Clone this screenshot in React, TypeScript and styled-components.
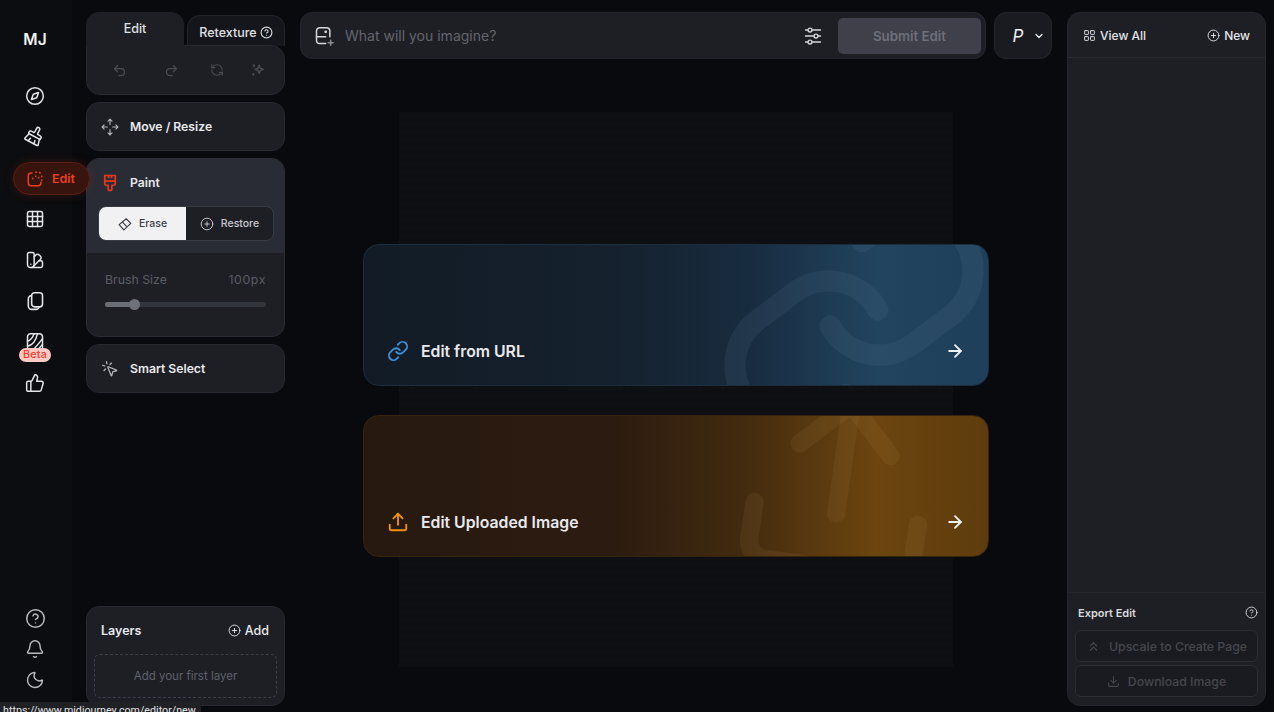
import React from 'react';
import styled, { createGlobalStyle } from 'styled-components';
import {
  ArrowRight,
  Bell,
  BrushCleaning,
  ChevronDown,
  ChevronsUp,
  CircleHelp,
  CirclePlus,
  Compass,
  Download,
  Grid3x3,
  LayoutGrid,
  Link,
  Moon,
  MousePointerClick,
  Redo2,
  RefreshCcw,
  SwatchBook,
  ThumbsUp,
  Undo2,
  Upload,
} from 'lucide-react';

const GlobalStyle = createGlobalStyle`
html, body {
  margin: 0;
  height: 100%;
  background: #090a0d;
  color: #e8e9ec;
  font-family: "Inter", "Liberation Sans", sans-serif;
  overflow: hidden;
}
* { box-sizing: border-box; }
`;

const Page = styled.div`
  position: relative;
  display: flex;
  height: 712px;
  width: 1274px;
  overflow: hidden;
`;

const Rail = styled.nav`
  width: 72px;
  flex: none;
  display: flex;
  flex-direction: column;
  align-items: center;
  background: #0c0d10;
  padding: 29px 2px 17px 0;
  position: relative;
  z-index: 2;
`;

const Logo = styled.div`
  height: 22px;
  line-height: 22px;
  margin-bottom: 24px;
  font-size: 15.5px;
  font-weight: 600;
  color: #f1f2f4;
`;

const RailItem = styled.div`
  position: relative;
  height: 41px;
  width: 100%;
  flex: none;
  display: flex;
  align-items: center;
  justify-content: center;
  color: #e4e5e8;
`;

const BroomTilt = styled.span`
  display: flex;
  transform: translateY(-2px) rotate(28deg);
`;

const RailPill = styled.div`
  align-self: flex-start;
  margin: 5px 0 3px 13px;
  width: 77px;
  height: 33px;
  flex: none;
  display: flex;
  align-items: center;
  gap: 8px;
  padding-left: 12px;
  border-radius: 17px;
  background: #38140f;
  border: 1px solid #5a1e12;
  box-shadow: 0 0 10px rgba(180, 50, 20, 0.22);
  color: #e8401c;
  font-size: 12.4px;
  font-weight: 600;
`;

const Beta = styled.span`
  position: absolute;
  left: 19px;
  top: 27px;
  width: 32px;
  height: 14px;
  border-radius: 7px;
  background: #ffc9c4;
  color: #f0392b;
  font-size: 10.5px;
  line-height: 14px;
  text-align: center;
  font-weight: 500;
  letter-spacing: 0.3px;
`;

const RailSpacer = styled.div`
  flex: 1;
`;

const RailFoot = styled.div`
  height: 30.5px;
  display: flex;
  align-items: center;
  justify-content: center;
  color: #b9bbc0;
`;

const ToolColumn = styled.aside`
  width: 199px;
  flex: none;
  margin: 12px 15px 6px 14px;
  display: flex;
  flex-direction: column;
  gap: 7px;
`;

const TabGroup = styled.div`
  display: flex;
  flex-direction: column;
`;

const Tabs = styled.div`
  display: flex;
  align-items: flex-end;
  gap: 3px;
  height: 33px;
`;

const Tab = styled.div<{ $active?: boolean }>`
  width: 98px;
  height: ${(p) => (p.$active ? '34px' : '31px')};
  margin-bottom: -1px;
  display: flex;
  align-items: flex-start;
  justify-content: center;
  gap: 3px;
  padding-top: ${(p) => (p.$active ? '8px' : '9px')};
  border-radius: 13px 13px 0 0;
  background: ${(p) => (p.$active ? '#1e1f25' : '#15161b')};
  border: 1px solid ${(p) => (p.$active ? '#1e1f25' : '#24252b')};
  border-bottom: none;
  font-size: 12.5px;
  font-weight: 500;
  line-height: 15px;
  color: #e0e1e5;
  position: relative;
  z-index: ${(p) => (p.$active ? 2 : 0)};
`;

const TabHelp = styled.span`
  display: flex;
  margin-top: 1px;
`;

const HistoryBar = styled.div`
  position: relative;
  z-index: 1;
  height: 50px;
  background: #1e1f25;
  border: 1px solid #282930;
  border-radius: 0 14px 14px 14px;
  display: flex;
  align-items: center;
  color: #4a4c53;
  padding-left: 25px;
`;

const HistorySlot = styled.span<{ $w: number }>`
  width: ${(p) => p.$w}px;
  display: flex;
`;

const ToolCard = styled.div`
  height: 49px;
  flex: none;
  background: #1e1f25;
  border: 1px solid #282930;
  border-radius: 13px;
  display: flex;
  align-items: center;
  gap: 11px;
  padding-left: 14px;
  color: #b4b6bb;
`;

const ToolTitle = styled.span`
  font-size: 12.2px;
  font-weight: 600;
  color: #e9eaed;
`;

const PaintCard = styled.div`
  height: 179px;
  flex: none;
  background: #1e1f25;
  border: 1px solid #2c2d34;
  border-radius: 13px;
  overflow: hidden;
`;

const PaintTop = styled.div`
  height: 94px;
  background: #2a2c35;
  padding: 0 10px 0 11px;
`;

const PaintHead = styled.div`
  height: 47px;
  display: flex;
  align-items: center;
  gap: 11px;
  padding-left: 3px;
  color: #e7391a;
`;

const Segment = styled.div`
  display: flex;
  height: 35px;
  border: 1px solid #3a3c45;
  border-radius: 8px;
  background: #1e1f25;
  overflow: hidden;
`;

const SegmentItem = styled.div<{ $active?: boolean }>`
  flex: 1;
  display: flex;
  align-items: center;
  justify-content: center;
  gap: 7px;
  font-size: 10.5px;
  font-weight: 500;
  background: ${(p) => (p.$active ? '#f1f1f4' : 'transparent')};
  color: ${(p) => (p.$active ? '#3a3b42' : '#c9cad0')};
`;

const BrushBlock = styled.div`
  padding: 19px 18px 0;
`;

const BrushRow = styled.div`
  display: flex;
  justify-content: space-between;
  font-size: 12.3px;
  line-height: 16px;
  color: #5a5c64;
`;

const BrushValue = styled.span`
  letter-spacing: 0.6px;
`;

const Track = styled.div`
  position: relative;
  height: 5px;
  margin-top: 14px;
  border-radius: 3px;
  background: #33353c;
`;

const TrackFill = styled.div`
  height: 100%;
  border-radius: 3px;
  background: #6b6d74;
`;

const Thumb = styled.div`
  position: absolute;
  top: -3px;
  width: 11px;
  height: 11px;
  border-radius: 50%;
  background: #6f7178;
`;

const LayersCard = styled.div`
  margin-top: auto;
  height: 100px;
  background: #1e1f25;
  border: 1px solid #282930;
  border-radius: 13px;
  padding: 0 7px;
`;

const LayersHead = styled.div`
  height: 47px;
  display: flex;
  align-items: center;
  justify-content: space-between;
  padding: 0 8px 0 7px;
  font-size: 12.5px;
  font-weight: 600;
  color: #e9eaed;
`;

const AddLink = styled.span`
  display: flex;
  align-items: center;
  gap: 4px;
  font-weight: 500;
`;

const LayerSlot = styled.div`
  height: 44px;
  border: 1px dashed #3c3e46;
  border-radius: 6px;
  display: flex;
  align-items: center;
  justify-content: center;
  font-size: 11.5px;
  color: #5f616b;
`;

const Main = styled.main`
  width: 752px;
  flex: none;
  margin-right: 15px;
  padding-top: 12px;
  display: flex;
  flex-direction: column;
`;

const TopRow = styled.div`
  display: flex;
  gap: 8px;
  height: 47px;
  flex: none;
`;

const PromptBar = styled.div`
  flex: 1;
  display: flex;
  align-items: center;
  background: #1e1f25;
  border: 1px solid #26272d;
  border-radius: 12px;
  padding: 0 4px 0 13px;
  color: #d6d7db;
`;

const Placeholder = styled.span`
  flex: 1;
  margin-left: 11px;
  font-size: 14px;
  color: #63656d;
`;

const FilterButton = styled.span`
  display: flex;
  margin-right: 16px;
`;

const SubmitButton = styled.div`
  width: 143px;
  height: 36px;
  border-radius: 5px;
  background: #3f404a;
  color: #6d6f7a;
  font-size: 13.3px;
  font-weight: 600;
  display: flex;
  align-items: center;
  justify-content: center;
`;

const ModeButton = styled.div`
  width: 58px;
  display: flex;
  align-items: center;
  justify-content: center;
  gap: 10px;
  padding-left: 12px;
  background: #1a1b20;
  border: 1px solid #24252b;
  border-radius: 12px;
  color: #f0f0f3;
`;

const ModeLetter = styled.span`
  font-style: italic;
  font-size: 17px;
`;

const Stage = styled.div`
  position: relative;
  flex: 1;
  display: flex;
  justify-content: center;
  padding-top: 53px;
`;

const CanvasSheet = styled.div`
  width: 554px;
  height: 555px;
  background-color: #0e0f13;
  background-image: radial-gradient(#111216 1px, transparent 1px);
  background-size: 8px 8px;
`;

const CardLayer = styled.div`
  position: absolute;
  inset: 0;
  display: flex;
  flex-direction: column;
  align-items: center;
  gap: 29px;
  padding-top: 185px;
`;

const SourceCard = styled.div<{ $tone: 'blue' | 'amber' }>`
  position: relative;
  width: 626px;
  height: 142px;
  flex: none;
  overflow: hidden;
  border-radius: 16px;
  border: 1px solid ${(p) => (p.$tone === 'blue' ? '#1c2d3e' : '#38250f')};
  background: ${(p) =>
    p.$tone === 'blue'
      ? 'linear-gradient(90deg, rgba(19,29,40,0.9) 0%, rgba(21,34,47,0.94) 40%, #182c40 62%, #21445f 82%, #1f3f5a 100%)'
      : 'linear-gradient(90deg, rgba(42,26,16,0.9) 0%, rgba(46,28,16,0.94) 40%, #412a0f 60%, #6c450f 82%, #5e3c0d 100%)'};
`;

const Watermark = styled.span<{ $x: number; $y: number; $deg: number; $color: string }>`
  position: absolute;
  left: ${(p) => p.$x}px;
  top: ${(p) => p.$y}px;
  display: flex;
  transform: rotate(${(p) => p.$deg}deg);
  color: ${(p) => p.$color};
`;

const CardRow = styled.div`
  position: absolute;
  left: 23px;
  right: 23px;
  bottom: 23px;
  display: flex;
  align-items: center;
  gap: 12px;
`;

const CardLabel = styled.span`
  flex: 1;
  font-size: 15.8px;
  font-weight: 600;
  color: #e9eaed;
`;

const CardIcon = styled.span<{ $color: string }>`
  display: flex;
  color: ${(p) => p.$color};
`;

const ArrowIcon = styled.span`
  display: flex;
  color: #f0f1f3;
`;

const SidePanel = styled.aside`
  width: 199px;
  flex: none;
  margin: 12px 0 6px;
  background: #1e1f25;
  border: 1px solid #26272d;
  border-radius: 13px;
  display: flex;
  flex-direction: column;
`;

const SideHead = styled.div`
  height: 45px;
  flex: none;
  border-bottom: 1px solid #2a2b31;
  display: flex;
  align-items: center;
  justify-content: space-between;
  padding: 0 15px 0 15px;
  font-size: 12px;
  font-weight: 500;
  color: #e4e5e8;
`;

const SideAction = styled.span`
  display: flex;
  align-items: center;
  gap: 4px;
`;

const SideBody = styled.div`
  flex: 1;
`;

const ExportBlock = styled.div`
  flex: none;
  height: 113px;
  border-top: 1px solid #25262c;
  padding: 0 7px;
`;

const ExportHead = styled.div`
  height: 37px;
  display: flex;
  align-items: center;
  justify-content: space-between;
  padding: 2px 0 0 3px;
  font-size: 11px;
  font-weight: 600;
  color: #d9dade;
`;

const ExportButton = styled.div`
  height: 32px;
  margin-bottom: 3px;
  display: flex;
  align-items: center;
  justify-content: center;
  gap: 8px;
  border: 1px solid #2c2d33;
  border-radius: 6px;
  background: #1a1b20;
  font-size: 12.3px;
  font-weight: 500;
  color: #45474e;
`;

const StatusBubble = styled.div`
  position: absolute;
  left: 0;
  top: 702px;
  width: 201px;
  height: 20px;
  padding: 2px 0 0 3px;
  background: #202124;
  border-radius: 0 3px 0 0;
  font-family: "Roboto", sans-serif;
  font-size: 10.7px;
  line-height: 14px;
  color: #e2e3e6;
  white-space: nowrap;
  z-index: 3;
`;

const EditIcon = () => (
  <svg width="18" height="18" viewBox="0 0 24 24" fill="none" stroke="currentColor" strokeWidth="2" strokeLinecap="round" strokeLinejoin="round">
    <path d="M8 4H7a4 4 0 0 0-4 4v9a4 4 0 0 0 4 4h9a4 4 0 0 0 4-4v-1" />
    <path d="M13 3h1M18 3.5l1 .5M21 8v1M21 13v.5M13 8v.5M9 11v.5M17 10v.5" strokeDasharray="1 2" />
  </svg>
);

const TextureIcon = () => (
  <svg width="20" height="20" viewBox="0 0 24 24" fill="none" stroke="currentColor" strokeWidth="1.8" strokeLinecap="round">
    <rect x="3" y="2" width="18" height="20" rx="4" />
    <path d="M3 11c4-1 6-4 8-9M3 17c6-1 10-6 12-15M8 22c5-3 9-9 13-14M15 22c2-3 4-5 6-7" />
  </svg>
);

const StackIcon = () => (
  <svg width="20" height="20" viewBox="0 0 24 24" fill="none" stroke="currentColor" strokeWidth="1.9" strokeLinejoin="round">
    <rect x="8" y="2" width="13" height="17" rx="3.5" />
    <path d="M8 5.5A4 4 0 0 0 4 9.5V18a4 4 0 0 0 4 4h5a4 4 0 0 0 4-3" />
  </svg>
);

const MoveIcon = () => (
  <svg width="18" height="18" viewBox="0 0 24 24" fill="none" stroke="currentColor" strokeWidth="1.5" strokeLinecap="round" strokeLinejoin="round">
    <path d="M12 1.5v7M9.3 4.2 12 1.5l2.7 2.7M12 15.5v7M9.3 19.8 12 22.5l2.7-2.7M1.5 12h7M4.2 9.3 1.5 12l2.7 2.7M15.5 12h7M19.8 9.3 22.5 12l-2.7 2.7" />
  </svg>
);

const PaintIcon = () => (
  <svg width="18" height="18" viewBox="0 0 24 24" fill="none" stroke="currentColor" strokeWidth="2.3" strokeLinejoin="round">
    <path d="M5 2h14v11a2 2 0 0 1-2 2h-2.5v4.5a2.5 2.5 0 0 1-5 0V15H7a2 2 0 0 1-2-2z" />
    <path d="M5 9.5h14M10 2v3.5M14 2v3.5" />
  </svg>
);

const StarsIcon = () => (
  <svg width="14" height="14" viewBox="0 0 24 24" fill="none" stroke="currentColor" strokeWidth="2.4" strokeLinejoin="round">
    <path d="M14 4l2 5 5 2-5 2-2 5-2-5-5-2 5-2z" />
    <path d="M5 4v1M4 19v1" strokeLinecap="round" strokeWidth="3.5" />
  </svg>
);

const EraserIcon = () => (
  <svg width="14" height="14" viewBox="0 0 24 24" fill="none" stroke="currentColor" strokeWidth="2" strokeLinejoin="round">
    <path d="M14 3 22 11 10 22 2 13z" />
    <path d="M7 8l8 8.5" />
  </svg>
);

const PromptImageIcon = () => (
  <svg width="20" height="20" viewBox="0 0 24 24" fill="none" stroke="currentColor" strokeWidth="1.8" strokeLinecap="round" strokeLinejoin="round">
    <path d="M14 21H7a4 4 0 0 1-4-4V6a4 4 0 0 1 4-4h8a4 4 0 0 1 4 4v7" />
    <path d="M3 13h11" />
    <circle cx="14" cy="7" r="0.8" fill="currentColor" />
    <path d="M20 17v6M17 20h6" stroke="#8a8c93" />
  </svg>
);

const FilterIcon = () => (
  <svg width="18" height="18" viewBox="0 0 24 24" fill="none" stroke="currentColor" strokeWidth="1.8" strokeLinecap="round">
    <path d="M11 4h11M2 4h3M2 12h11M19 12h3M11 20h11M2 20h3" />
    <circle cx="8" cy="4" r="2.6" />
    <circle cx="16" cy="12" r="2.6" />
    <circle cx="8" cy="20" r="2.6" />
  </svg>
);

export default function App() {
  return (
    <>
      <GlobalStyle />
      <Page>
        <Rail>
          <Logo>MJ</Logo>
          <RailItem><Compass size={20} strokeWidth={1.8} /></RailItem>
          <RailItem><BroomTilt><BrushCleaning size={20} strokeWidth={1.8} /></BroomTilt></RailItem>
          <RailPill><EditIcon />Edit</RailPill>
          <RailItem><Grid3x3 size={20} strokeWidth={1.8} /></RailItem>
          <RailItem><SwatchBook size={20} strokeWidth={1.8} /></RailItem>
          <RailItem><StackIcon /></RailItem>
          <RailItem><TextureIcon /><Beta>Beta</Beta></RailItem>
          <RailItem><ThumbsUp size={20} strokeWidth={1.8} /></RailItem>
          <RailSpacer />
          <RailFoot><CircleHelp size={21} strokeWidth={1.7} /></RailFoot>
          <RailFoot><Bell size={20} strokeWidth={1.7} /></RailFoot>
          <RailFoot><Moon size={20} strokeWidth={1.7} /></RailFoot>
        </Rail>

        <ToolColumn>
          <TabGroup>
            <Tabs>
              <Tab $active>Edit</Tab>
              <Tab>Retexture <TabHelp><CircleHelp size={13} /></TabHelp></Tab>
            </Tabs>
            <HistoryBar>
              <HistorySlot $w={52}><Undo2 size={15} /></HistorySlot>
              <HistorySlot $w={46}><Redo2 size={15} /></HistorySlot>
              <HistorySlot $w={41}><RefreshCcw size={14} /></HistorySlot>
              <HistorySlot $w={14}><StarsIcon /></HistorySlot>
            </HistoryBar>
          </TabGroup>

          <ToolCard><MoveIcon /><ToolTitle>Move / Resize</ToolTitle></ToolCard>

          <PaintCard>
            <PaintTop>
              <PaintHead>
                <PaintIcon />
                <ToolTitle>Paint</ToolTitle>
              </PaintHead>
              <Segment>
                <SegmentItem $active><EraserIcon />Erase</SegmentItem>
                <SegmentItem><CirclePlus size={14} strokeWidth={1.6} />Restore</SegmentItem>
              </Segment>
            </PaintTop>
            <BrushBlock>
              <BrushRow><span>Brush Size</span><BrushValue>100px</BrushValue></BrushRow>
              <Track>
                <TrackFill style={{ width: `${(30 / 162) * 100}%` }} />
                <Thumb style={{ left: 24 }} />
              </Track>
            </BrushBlock>
          </PaintCard>

          <ToolCard><MousePointerClick size={18} strokeWidth={1.7} /><ToolTitle>Smart Select</ToolTitle></ToolCard>

          <LayersCard>
            <LayersHead>
              <span>Layers</span>
              <AddLink><CirclePlus size={13} strokeWidth={1.7} />Add</AddLink>
            </LayersHead>
            <LayerSlot>Add your first layer</LayerSlot>
          </LayersCard>
        </ToolColumn>

        <Main>
          <TopRow>
            <PromptBar>
              <PromptImageIcon />
              <Placeholder>What will you imagine?</Placeholder>
              <FilterButton><FilterIcon /></FilterButton>
              <SubmitButton>Submit Edit</SubmitButton>
            </PromptBar>
            <ModeButton>
              <ModeLetter>P</ModeLetter>
              <ChevronDown size={12} strokeWidth={2.5} />
            </ModeButton>
          </TopRow>
          <Stage>
            <CanvasSheet />
            <CardLayer>
              <SourceCard $tone="blue">
                <Watermark $x={355} $y={-62} $deg={8} $color="rgba(120,150,175,0.11)">
                  <Link size={270} strokeWidth={1.9} />
                </Watermark>
                <CardRow>
                  <CardIcon $color="#3d8fd6"><Link size={22} strokeWidth={2} /></CardIcon>
                  <CardLabel>Edit from URL</CardLabel>
                  <ArrowIcon><ArrowRight size={20} strokeWidth={2.2} /></ArrowIcon>
                </CardRow>
              </SourceCard>
              <SourceCard $tone="amber">
                <Watermark $x={366} $y={-40} $deg={8} $color="rgba(190,150,90,0.1)">
                  <Upload size={220} strokeWidth={2} />
                </Watermark>
                <CardRow>
                  <CardIcon $color="#f0940f"><Upload size={22} strokeWidth={2} /></CardIcon>
                  <CardLabel>Edit Uploaded Image</CardLabel>
                  <ArrowIcon><ArrowRight size={20} strokeWidth={2.2} /></ArrowIcon>
                </CardRow>
              </SourceCard>
            </CardLayer>
          </Stage>
        </Main>

        <SidePanel>
          <SideHead>
            <SideAction><LayoutGrid size={13} strokeWidth={1.7} />View All</SideAction>
            <SideAction><CirclePlus size={13} strokeWidth={1.7} />New</SideAction>
          </SideHead>
          <SideBody />
          <ExportBlock>
            <ExportHead>
              <span>Export Edit</span>
              <CircleHelp size={13} strokeWidth={1.7} />
            </ExportHead>
            <ExportButton><ChevronsUp size={15} />Upscale to Create Page</ExportButton>
            <ExportButton><Download size={13} />Download Image</ExportButton>
          </ExportBlock>
        </SidePanel>

        <StatusBubble>https://www.midjourney.com/editor/new</StatusBubble>
      </Page>
    </>
  );
}
